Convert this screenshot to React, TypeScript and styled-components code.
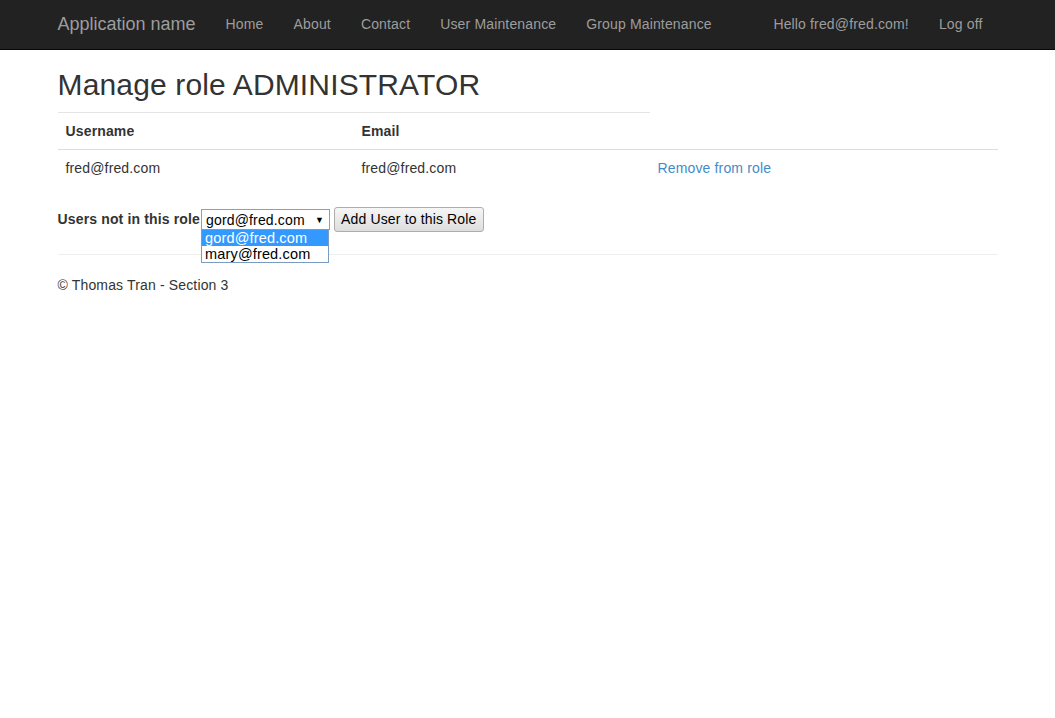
import React from "react";
import styled, { createGlobalStyle } from "styled-components";

const GlobalStyle = createGlobalStyle`
  html, body { margin: 0; padding: 0; background: #fff; }
  body {
    font-family: "Liberation Sans", Arial, sans-serif;
    font-size: 14px;
    line-height: 20px;
    letter-spacing: 0.15px;
    color: #333;
  }
  * { box-sizing: border-box; }
`;

const Navbar = styled.header`
  height: 50px;
  background: #222;
  border-bottom: 1px solid #080808;
`;

const Container = styled.div`
  width: 940px;
  margin: 0 auto;
`;

const NavInner = styled(Container)`
  display: flex;
  align-items: stretch;
  height: 49px;
`;

const Brand = styled.a`
  font-size: 18px;
  line-height: 20px;
  letter-spacing: 0;
  padding: 14px 15px 15px 0;
  color: #9d9d9d;
  text-decoration: none;
`;

const NavList = styled.nav<{ $right?: boolean }>`
  display: flex;
  margin-left: ${(p) => (p.$right ? "auto" : "0")};
`;

const NavLink = styled.a`
  padding: 14px 15px 15px 15px;
  color: #9d9d9d;
  text-decoration: none;
  font-size: 14px;
  line-height: 20px;
  letter-spacing: 0.15px;
`;

const Heading = styled.h2`
  font-size: 30px;
  line-height: 33px;
  font-weight: 500;
  letter-spacing: 0.15px;
  margin: 18px 0 0;
  color: #333;
`;

const Rule = styled.div`
  width: 592px;
  height: 1px;
  margin-top: 11px;
  background: #e5e5e5;
`;

const Table = styled.table`
  width: 100%;
  border-collapse: collapse;
  table-layout: fixed;
  margin-bottom: 20px;
`;

const Th = styled.th`
  text-align: left;
  font-weight: bold;
  padding: 8px;
  line-height: 20px;
  border-bottom: 1px solid #ddd;
`;

const Td = styled.td`
  padding: 8px;
  line-height: 20px;
`;

const Link = styled.a`
  color: #428bca;
  text-decoration: none;
`;

const FormRow = styled.div`
  display: flex;
  align-items: center;
  height: 26px;
`;

const Label = styled.label`
  font-weight: bold;
  margin-right: 1px;
`;

const SelectWrap = styled.div`
  position: relative;
  width: 129px;
  height: 21px;
  margin-top: 1px;
`;

const SelectBox = styled.div`
  display: flex;
  align-items: center;
  justify-content: space-between;
  height: 21px;
  border: 1px solid #7da2ce;
  padding: 0 5px 0 4px;
  color: #000;
  font-size: 14px;
  background: #fff;
`;

const Arrow = styled.span`
  font-size: 9px;
  color: #000;
`;

const Listbox = styled.ul`
  position: absolute;
  top: 20px;
  left: 0;
  width: 128px;
  margin: 0;
  padding: 0;
  list-style: none;
  background: #fff;
  border: 1px solid #7a9cc2;
`;

const Option = styled.li<{ $active?: boolean }>`
  height: 16px;
  line-height: 16px;
  padding-left: 3px;
  font-size: 14.5px;
  background: ${(p) => (p.$active ? "#3399ff" : "#fff")};
  color: ${(p) => (p.$active ? "#fff" : "#000")};
`;

const Button = styled.button`
  margin-left: 4px;
  height: 25px;
  padding: 0 6px;
  font-family: "Liberation Sans", Arial, sans-serif;
  font-size: 14px;
  letter-spacing: 0.15px;
  color: #000;
  border: 1px solid #adadad;
  border-radius: 3px;
  background: linear-gradient(#f6f6f6, #dddddd);
`;

const FooterRule = styled.hr`
  margin: 22px 0 20px;
  border: 0;
  border-top: 1px solid #eee;
`;

const Footer = styled.footer`
  p { margin: 0; }
`;

export default function App() {
  return (
    <>
      <GlobalStyle />
      <Navbar>
        <NavInner>
          <Brand href="#">Application name</Brand>
          <NavList>
            <NavLink href="#">Home</NavLink>
            <NavLink href="#">About</NavLink>
            <NavLink href="#">Contact</NavLink>
            <NavLink href="#">User Maintenance</NavLink>
            <NavLink href="#">Group Maintenance</NavLink>
          </NavList>
          <NavList $right>
            <NavLink href="#">Hello fred@fred.com!</NavLink>
            <NavLink href="#">Log off</NavLink>
          </NavList>
        </NavInner>
      </Navbar>
      <Container>
        <Heading>Manage role ADMINISTRATOR</Heading>
        <Rule />
        <Table>
          <colgroup>
            <col style={{ width: 296 }} />
            <col style={{ width: 296 }} />
            <col />
          </colgroup>
          <thead>
            <tr>
              <Th>Username</Th>
              <Th>Email</Th>
              <Th></Th>
            </tr>
          </thead>
          <tbody>
            <tr>
              <Td>fred@fred.com</Td>
              <Td>fred@fred.com</Td>
              <Td>
                <Link href="#">Remove from role</Link>
              </Td>
            </tr>
          </tbody>
        </Table>
        <FormRow>
          <Label>Users not in this role</Label>
          <SelectWrap>
            <SelectBox>
              <span>gord@fred.com</span>
              <Arrow>▼</Arrow>
            </SelectBox>
            <Listbox>
              <Option $active>gord@fred.com</Option>
              <Option>mary@fred.com</Option>
            </Listbox>
          </SelectWrap>
          <Button>Add User to this Role</Button>
        </FormRow>
        <FooterRule />
        <Footer>
          <p>© Thomas Tran - Section 3</p>
        </Footer>
      </Container>
    </>
  );
}
